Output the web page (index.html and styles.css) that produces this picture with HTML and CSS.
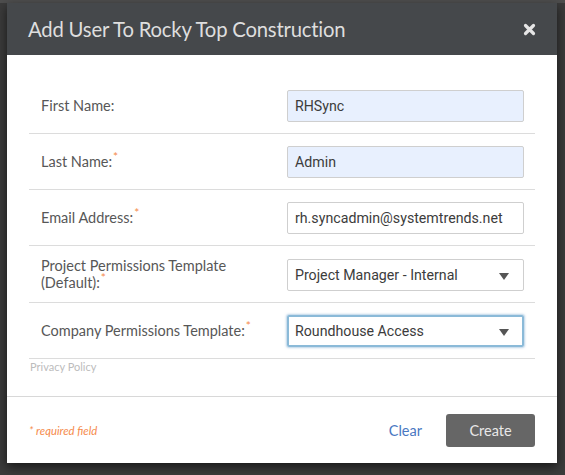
FILE: index.html
```html
<!DOCTYPE html>
<html lang="en">
<head>
    <meta charset="UTF-8">
    <meta name="viewport" content="width=device-width, initial-scale=1.0">
    <title>Add User</title>
    <link rel="stylesheet" href="styles.css">
</head>
<body>
    <div class="backdrop"></div>

    <div class="modal">
        <div class="modal-header">
            <h2>Add User To Rocky Top Construction</h2>
            <button class="close-button">
                <svg width="13" height="13" viewBox="0 0 13 13">
                    <path d="M2.5 2.5 L10.5 10.5 M10.5 2.5 L2.5 10.5" stroke="#e6e6e6" stroke-width="3.2" stroke-linecap="round"/>
                </svg>
            </button>
        </div>

        <div class="modal-body">
            <div class="form-row">
                <label>First Name:</label>
                <div class="field autofill">RHSync</div>
            </div>
            <div class="form-row">
                <label>Last Name:<span class="req">*</span></label>
                <div class="field autofill">Admin</div>
            </div>
            <div class="form-row">
                <label>Email Address:<span class="req">*</span></label>
                <div class="field">rh.syncadmin@systemtrends.net</div>
            </div>
            <div class="form-row">
                <label>Project Permissions Template (Default):<span class="req">*</span></label>
                <div class="field select">Project Manager - Internal<span class="arrow"></span></div>
            </div>
            <div class="form-row">
                <label>Company Permissions Template:<span class="req">*</span></label>
                <div class="field select focused">Roundhouse Access<span class="arrow"></span></div>
            </div>
            <a class="privacy">Privacy Policy</a>
        </div>

        <div class="modal-footer">
            <span class="required-note">* required field</span>
            <div class="actions">
                <a class="clear-link">Clear</a>
                <button class="create-button">Create</button>
            </div>
        </div>
    </div>
</body>
</html>
```

FILE: styles.css
```css
* {
    margin: 0;
    padding: 0;
    box-sizing: border-box;
}

body {
    width: 565px;
    height: 475px;
    overflow: hidden;
    background-color: #3b3b3b;
    font-family: Lato, "Liberation Sans", sans-serif;
    padding: 3px 8px 0 7px;
    position: relative;
}

.backdrop {
    position: absolute;
    top: 0;
    left: 0;
    width: 100%;
    height: 100%;
    background: linear-gradient(to bottom, #4e4e4e 0, #4e4e4e 3px, #3b3b3b 3px);
}

.modal {
    position: relative;
    width: 550px;
    background: white;
    box-shadow: 0 4px 10px rgba(0, 0, 0, 0.6);
}

.modal-header {
    height: 52px;
    background-color: #45484b;
    display: flex;
    align-items: center;
    justify-content: space-between;
    padding: 0 21px 0 21px;
}

.modal-header h2 {
    color: #dedede;
    font-size: 20.3px;
    font-weight: normal;
    letter-spacing: -0.2px;
}

.close-button {
    background: none;
    border: none;
    display: flex;
    margin-top: 1px;
}

.modal-body {
    padding: 23px 22px 0 22px;
    height: 341px;
}

.form-row {
    display: flex;
    align-items: center;
    padding: 12px 11px 11px 12px;
    border-bottom: 1px solid #dcdcdc;
}

.form-row label {
    flex: 1;
    color: #575757;
    font-size: 14.5px;
    line-height: 16.5px;
    padding-right: 30px;
}

.req {
    color: #f58a4b;
    font-size: 12px;
    line-height: 0;
    position: relative;
    top: -6px;
    margin-left: 1px;
}

.field {
    width: 237px;
    height: 32px;
    border: 1px solid #cfcfcf;
    border-radius: 2px;
    padding: 0 7px;
    display: flex;
    align-items: center;
    font-family: Roboto, "Liberation Sans", sans-serif;
    font-size: 14.2px;
    color: #3c3c3c;
    position: relative;
}

.field.autofill {
    background-color: #e8f0fe;
}

.field.select {
    padding-right: 30px;
}

.field.focused {
    border: 2px solid #8bbad8;
    box-shadow: 0 0 2px 1px rgba(120, 170, 210, 0.5);
    padding-left: 6px;
}

.arrow {
    position: absolute;
    right: 14px;
    top: 13px;
    width: 0;
    height: 0;
    border-left: 5.5px solid transparent;
    border-right: 5.5px solid transparent;
    border-top: 7px solid #555;
}

.focused .arrow {
    right: 13px;
    top: 12px;
}

.privacy {
    display: block;
    margin-top: 1px;
    margin-left: 1px;
    color: #bcbcbc;
    font-size: 11px;
}

.modal-footer {
    border-top: 1px solid #d8d8d8;
    height: 67px;
    display: flex;
    align-items: center;
    justify-content: space-between;
    padding: 0 22px 0 22px;
}

.required-note {
    color: #f58a4b;
    font-style: italic;
    font-size: 11.3px;
}

.actions {
    display: flex;
    align-items: center;
    gap: 24px;
}

.clear-link {
    color: #4a78c2;
    font-size: 14.5px;
}

.create-button {
    width: 89px;
    height: 33px;
    background: #666;
    color: #e8e8e8;
    border: none;
    border-radius: 3px;
    font-family: Lato, "Liberation Sans", sans-serif;
    font-size: 14.5px;
}
```
